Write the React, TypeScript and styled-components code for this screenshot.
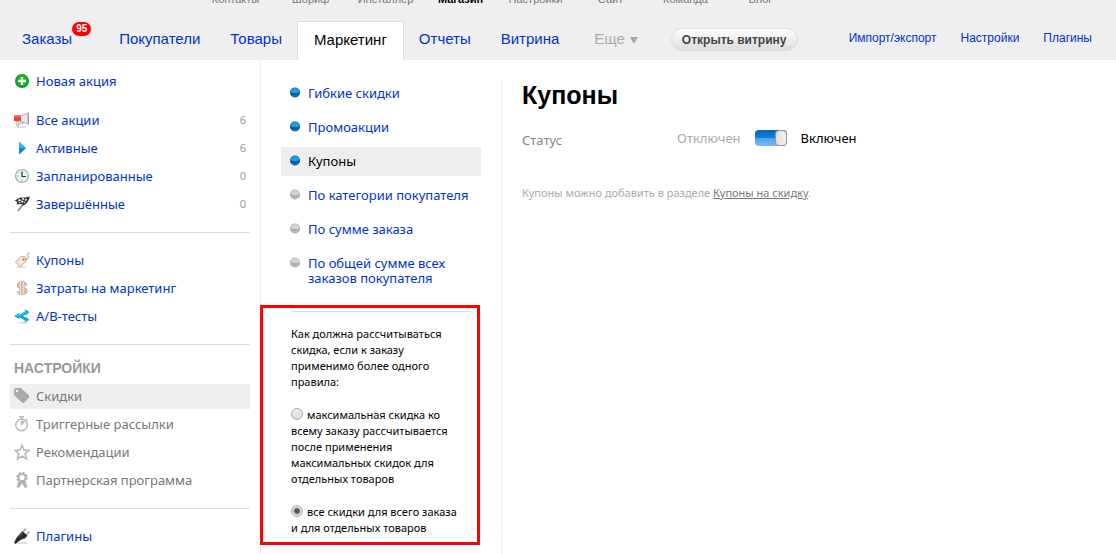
import React from 'react';
import styled, { createGlobalStyle } from 'styled-components';

const GlobalStyle = createGlobalStyle`
  *, *::before, *::after { box-sizing: border-box; }
  body {
    margin: 0;
    background: #fff;
    color: #000;
    font: 13px/16px "Noto Sans", "Open Sans", sans-serif;
  }
  a { color: #03c; text-decoration: none; }
  h1, h2, p, ul { margin: 0; padding: 0; }
  ul { list-style: none; }
`;

const Page = styled.div`
  min-height: 100vh;
  display: flex;
  flex-direction: column;
  overflow: hidden;
`;

const Header = styled.header`
  background: #efefef;
  font-family: "Liberation Sans", Arial, sans-serif;
`;

const AppStrip = styled.nav`
  display: flex;
  align-items: flex-end;
  height: 5px;
  padding-left: 198px;
  overflow: hidden;
  white-space: nowrap;
`;

const AppLink = styled.a<{ $active?: boolean }>`
  width: 75px;
  text-align: center;
  font-size: 11px;
  line-height: 12px;
  color: ${p => (p.$active ? '#000' : '#777')};
  font-weight: ${p => (p.$active ? 700 : 400)};
`;

const Bar = styled.div`
  display: flex;
  height: 55px;
  padding-top: 16px;
  white-space: nowrap;
`;

const Tabs = styled.nav`
  display: flex;
  padding-left: 7px;
`;

const Tab = styled.a<{ $muted?: boolean; $wide?: boolean }>`
  padding: 9px 15px 0;
  padding-left: ${p => (p.$muted ? '20px' : '15px')};
  margin-right: ${p => (p.$wide ? '17px' : '0')};
  color: ${p => (p.$muted ? '#aaa' : '#03c')};
  font-size: 15px;
  line-height: 18px;
`;

const ActiveTab = styled(Tab)`
  padding: 9px 16px 0;
  border: 1px solid #ddd;
  border-bottom: 0;
  background: #fff;
  color: #000;
`;

const BadgeAnchor = styled.span`
  position: relative;
`;

const Badge = styled.span`
  position: absolute;
  left: 100%;
  top: -8px;
  padding: 0 4px;
  border-radius: 7px;
  background: #f00;
  color: #fff;
  font-size: 10px;
  font-weight: 700;
  line-height: 14px;
`;

const Caret = styled.svg`
  margin-left: 5px;
`;

const StoreButton = styled.button`
  height: 23px;
  margin: 7px 0 0 18px;
  padding: 0 10px;
  border: 1px solid #ddd;
  border-radius: 12px;
  background: linear-gradient(#fff, #dcdcdc);
  color: #444;
  font: 700 12px/18px "Liberation Sans", Arial, sans-serif;
`;

const SideLinks = styled.nav`
  display: flex;
  gap: 24px;
  margin-left: auto;
  padding: 10px 24px 0 0;
  font-size: 12px;
  line-height: 14px;
`;

const Columns = styled.div`
  flex: 1;
  display: flex;
`;

const Sidebar = styled.aside`
  flex: none;
  width: 260px;
  padding: 9px 10px 4px;
`;

const Group = styled.ul`
  display: grid;
  gap: 3px;
  & + & { margin-top: 14px; }
`;

const Rule = styled.hr`
  height: 1px;
  margin: 15px 0;
  border: 0;
  background: #ddd;
`;

const GroupTitle = styled.h2`
  padding: 0 4px;
  margin-bottom: 8px;
  color: #999;
  font: 700 14px/16px "Liberation Sans", Arial, sans-serif;
`;

const Row = styled.a<{ $active?: boolean; $muted?: boolean }>`
  display: flex;
  align-items: center;
  gap: 6px;
  height: 25px;
  padding: 0 4px 2px;
  background: ${p => (p.$active ? '#eee' : 'transparent')};
  color: ${p => (p.$muted ? '#777' : '#03c')};
  white-space: nowrap;
  svg { flex: none; }
`;

const Count = styled.span`
  margin-left: auto;
  color: #999;
  font-size: 11px;
`;

const Discounts = styled.section`
  flex: none;
  width: 241px;
  border-left: 1px solid #eee;
  padding: 19px 0 9px;
`;

const RuleList = styled.ul`
  display: grid;
  gap: 5px;
  padding: 0 20px;
`;

const RuleLink = styled.a<{ $active?: boolean }>`
  display: flex;
  gap: 8px;
  padding: 7px 8px 7px 9px;
  background: ${p => (p.$active ? '#eee' : 'transparent')};
  color: ${p => (p.$active ? '#000' : '#03c')};
  line-height: 15px;
  svg { flex: none; margin-top: 1px; }
`;

const Calculation = styled.form`
  width: 220px;
  margin: 12px 0 0 -1px;
  padding: 3px 6px 6px 28px;
  border: 3px solid #f00;
  font-size: 11px;
  line-height: 16px;
  p, label { display: block; width: 174px; }
  label { margin-top: 17px; }
`;

const Line = styled.hr`
  width: 180px;
  height: 1px;
  margin: 0 0 14px;
  border: 0;
  background: #ddd;
`;

const Radio = styled.input`
  appearance: none;
  width: 12px;
  height: 12px;
  margin: 0 4px 0 0;
  vertical-align: -1px;
  border: 1px solid #aaa;
  border-radius: 50%;
  background: linear-gradient(#eee, #ddd);
  &:checked {
    background: radial-gradient(circle, #555 0 2px, #e4e4e4 4px);
  }
`;

const Content = styled.main`
  flex: 1;
  margin-top: 20px;
  padding-left: 20px;
  border-left: 1px solid #eee;
  h1 { font: 700 25px/30px "Liberation Sans", Arial, sans-serif; }
`;

const Field = styled.div`
  display: flex;
  align-items: center;
  margin-top: 18px;
`;

const FieldName = styled.span`
  width: 155px;
  padding-top: 4px;
  color: #888;
`;

const SwitchLabel = styled.label`
  display: flex;
  align-items: center;
  gap: 14px;
`;

const Off = styled.span`
  color: #aaa;
`;

const Switch = styled.input`
  appearance: none;
  width: 32px;
  height: 16px;
  margin: 0;
  border-radius: 4px;
  background: linear-gradient(#06b 0, #1480d8 50%, #4aa3ec 51%, #7bbdf5 100%);
  &::after {
    content: '';
    display: block;
    width: 12px;
    height: 16px;
    margin-left: auto;
    border: 1px solid #999;
    border-radius: 4px;
    background: linear-gradient(90deg, #ddd, #f4f4f4);
  }
`;

const Hint = styled.p`
  margin-top: 37px;
  color: #aaa;
  font-size: 11px;
  a { color: #777; text-decoration: underline; }
`;

const icons: Record<string, React.ReactNode> = {
  add: (
    <>
      <circle cx="8" cy="8" r="7" fill="#0a9c1c" />
      <circle cx="8" cy="7" r="5.5" fill="#16b52b" />
      <path d="M8 4v8M4 8h8" stroke="#fff" strokeWidth="2.4" />
    </>
  ),
  horn: (
    <>
      <ellipse cx="7" cy="15" rx="5" ry="1" fill="#ddd" />
      <path d="M6.500 4 14 1v11L6.500 9z" fill="#e8e8e8" stroke="#b5b5b5" />
      <path d="M14.500.5v12" stroke="#999" />
      <path d="M0 3.500h7v5.500H0z" fill="#e8403a" />
      <path d="M0 3.500h7v2H0z" fill="#f0665f" />
      <path d="M2 9.500h2.500v4.500H3zM5 10h4v2H5" fill="#eee" stroke="#aaa" strokeWidth=".8" />
    </>
  ),
  play: (
    <>
      <path d="M5 1.500 12 8l-7 6.500z" fill="#2fb4ea" />
      <path d="M5 8h7l-7 6.500z" fill="#0f8cd0" />
    </>
  ),
  clock: (
    <>
      <circle cx="8" cy="8" r="6.500" fill="#e9f1f1" stroke="#a3adad" strokeWidth="1.200" />
      <path d="M8 3.500v5h4" fill="none" stroke="#333" strokeWidth="1.200" />
      <path d="M3 8h1.500M8 12v1.500" stroke="#999" />
    </>
  ),
  flag: (
    <>
      <path d="M13 3 4 15" stroke="#c48a5a" strokeWidth="1.800" />
      <path d="M0 4.500C3 4.500 4 1.500 7 1.500S12 1.500 16 .5C15 4 13 8 9.500 9.500 7.500 7.500 5 8 2.500 8.500 4 6.500 3 5 0 4.500z" fill="#333" />
      <path d="m4 4 2-1 1 1.500-2 1zM8 2.500l2-.5.500 1.500-2 .5zM7 5l2-.5.5 2-2 0zM11 3.500l2-1-.5 2-1.500.5zM4.500 6.500l2-.8-.5 1.500zM10 6l1.500-.5-1 2z" fill="#fff" />
    </>
  ),
  tag: (
    <>
      <ellipse cx="7" cy="15" rx="5" ry="1" fill="#ddd" />
      <path d="M1.500 10 7 4.500l5 .5v4.500l-6 5z" fill="#fae2d0" stroke="#d2ae97" />
      <path d="M9.500 7.500c4 .5 6-2 4.500-3.500s0-3.500 2-2.500" fill="none" stroke="#a98a79" strokeWidth=".9" />
      <circle cx="9.500" cy="7.500" r=".9" fill="#8e7566" />
    </>
  ),
  money: (
    <>
      <path d="M6.500 1v14M9.500 1v14" stroke="#bfa390" strokeWidth="2" />
      <path d="M12 5.500C11.500 2.500 4.500 2.500 4.500 5.500S12 8 12 11s-7.500 2.500-8 0" fill="none" stroke="#b59883" strokeWidth="3" />
      <path d="M12 5.500C11.500 2.500 4.500 2.500 4.500 5.500S12 8 12 11s-7.500 2.500-8 0M6.500 1.500v13M9.500 1.500v13" fill="none" stroke="#f6dcc9" strokeWidth="1.200" />
    </>
  ),
  split: (
    <>
      <ellipse cx="9" cy="14.700" rx="6" ry="1" fill="#ddd" />
      <path d="M3 8h3l6-3.500M6 8l6 3.500" fill="none" stroke="#0ba0d8" strokeWidth="2.800" />
      <path d="M0 8l5-3v6zM10.500 1l5 3-3.500 3.500zM10.500 14.500l5-2.500-3.500-3.500z" fill="#12aee6" />
      <path d="M2 7.500h4l6-3.500" fill="none" stroke="#3accf7" />
    </>
  ),
  label: (
    <>
      <path d="M0 1.500 1.500 0H7l8 7.500v2L10 15 8.500 15 0 7z" fill="#aaa" />
      <circle cx="3" cy="3" r="1.200" fill="#eee" />
    </>
  ),
  timer: (
    <>
      <circle cx="7.500" cy="9" r="5.800" fill="none" stroke="#b8b8b8" strokeWidth="1.400" />
      <path d="M5 .8h5M7.500 1v2.500M11.800 4.500 13.500 3" fill="none" stroke="#b8b8b8" strokeWidth="1.500" />
      <path d="M7 9.800V4.500a4.500 4.500 0 0 1 4 1.500z" fill="#b8b8b8" />
    </>
  ),
  star: (
    <path d="m8 1.500 2 4.600 5 .4-3.800 3.300L12.500 15 8 12.200 3.500 15l1.300-5.200L1 6.500l5-.4z" fill="none" stroke="#b5b5b5" strokeWidth="1.500" />
  ),
  award: (
    <>
      <circle cx="8" cy="5.500" r="5" fill="none" stroke="#b0b0b0" strokeWidth="1.500" strokeDasharray="2.200 1.700" />
      <circle cx="8" cy="5.500" r="3.600" fill="none" stroke="#b0b0b0" strokeWidth="2" />
      <path d="M4.500 9.500h7l2 6h-3L8 11l-2.500 4.500h-3z" fill="#b0b0b0" />
    </>
  ),
  plug: (
    <>
      <ellipse cx="8" cy="15" rx="6" ry="1" fill="#ddd" />
      <path d="M9.500 3.500 12 .5M12.500 6.500l3-3" stroke="#999" strokeWidth="1.300" />
      <path d="M3 9 8.500 3l5 4.500-2 2.500-5 2-5 4L0 14.500z" fill="#2d2d2d" />
      <path d="m5 8.500 4-4" stroke="#777" />
    </>
  ),
};

const Icon = ({ name }: { name: string }) => (
  <svg width="16" height="16" viewBox="0 0 16 16" aria-hidden="true">{icons[name]}</svg>
);

const Dot = ({ on }: { on: boolean }) => (
  <svg width="10" height="11" viewBox="0 0 10 11" aria-hidden="true">
    <circle cx="5" cy="5.500" r="5" fill={on ? '#02569b' : '#aaa'} />
    <path d="M.5 5.500a4.500 4.500 0 0 1 9 0q-4.500 1.500-9 0z" fill={on ? '#18a0e0' : '#d2d2d2'} />
    <path d="M2 8q3 2.500 6 0" fill="none" stroke={on ? '#1680c4' : '#c4c4c4'} />
  </svg>
);

interface Item {
  icon: string;
  text: string;
  count?: number;
  active?: boolean;
}

const Menu = ({ items, muted }: { items: Item[]; muted?: boolean }) => (
  <Group>
    {items.map(i => (
      <li key={i.text}>
        <Row href="#" $active={i.active} $muted={muted}>
          <Icon name={i.icon} />
          {i.text}
          {i.count !== undefined && <Count>{i.count}</Count>}
        </Row>
      </li>
    ))}
  </Group>
);

const apps = ['Контакты', 'Шориф', 'Инсталлер', 'Магазин', 'Настройки', 'Сайт', 'Команда', 'Блог'];

const rules = [
  { text: 'Гибкие скидки', on: true },
  { text: 'Промоакции', on: true },
  { text: 'Купоны', on: true, active: true },
  { text: 'По категории покупателя', on: false },
  { text: 'По сумме заказа', on: false },
  { text: 'По общей сумме всех заказов покупателя', on: false },
];

export default function App() {
  return (
    <Page>
      <GlobalStyle />
      <Header>
        <AppStrip>
          {apps.map(a => <AppLink key={a} href="#" $active={a === 'Магазин'}>{a}</AppLink>)}
        </AppStrip>
        <Bar>
          <Tabs>
            <Tab href="#" $wide><BadgeAnchor>Заказы<Badge>95</Badge></BadgeAnchor></Tab>
            <Tab href="#">Покупатели</Tab>
            <Tab href="#">Товары</Tab>
            <ActiveTab href="#">Маркетинг</ActiveTab>
            <Tab href="#">Отчеты</Tab>
            <Tab href="#">Витрина</Tab>
            <Tab href="#" $muted>
              Еще
              <Caret width="8" height="7" viewBox="0 0 8 7" aria-hidden="true"><path d="M0 0h8L4 7z" fill="#aaa" /></Caret>
            </Tab>
          </Tabs>
          <StoreButton type="button">Открыть витрину</StoreButton>
          <SideLinks>
            <a href="#">Импорт/экспорт</a>
            <a href="#">Настройки</a>
            <a href="#">Плагины</a>
          </SideLinks>
        </Bar>
      </Header>
      <Columns>
        <Sidebar>
          <Menu items={[{ icon: 'add', text: 'Новая акция' }]} />
          <Menu
            items={[
              { icon: 'horn', text: 'Все акции', count: 6 },
              { icon: 'play', text: 'Активные', count: 6 },
              { icon: 'clock', text: 'Запланированные', count: 0 },
              { icon: 'flag', text: 'Завершённые', count: 0 },
            ]}
          />
          <Rule />
          <Menu
            items={[
              { icon: 'tag', text: 'Купоны' },
              { icon: 'money', text: 'Затраты на маркетинг' },
              { icon: 'split', text: 'A/B-тесты' },
            ]}
          />
          <Rule />
          <GroupTitle>НАСТРОЙКИ</GroupTitle>
          <Menu
            muted
            items={[
              { icon: 'label', text: 'Скидки', active: true },
              { icon: 'timer', text: 'Триггерные рассылки' },
              { icon: 'star', text: 'Рекомендации' },
              { icon: 'award', text: 'Партнерская программа' },
            ]}
          />
          <Rule />
          <Menu items={[{ icon: 'plug', text: 'Плагины' }]} />
        </Sidebar>
        <Discounts>
          <RuleList>
            {rules.map(r => (
              <li key={r.text}>
                <RuleLink href="#" $active={r.active}><Dot on={r.on} /><span>{r.text}</span></RuleLink>
              </li>
            ))}
          </RuleList>
          <Calculation>
            <Line />
            <p>Как должна рассчитываться скидка, если к заказу применимо более одного правила:</p>
            <label>
              <Radio type="radio" name="calc" value="max" />
              максимальная скидка ко всему заказу рассчитывается после применения максимальных скидок для отдельных товаров
            </label>
            <label>
              <Radio type="radio" name="calc" value="sum" defaultChecked />
              все скидки для всего заказа и для отдельных товаров
            </label>
          </Calculation>
        </Discounts>
        <Content>
          <h1>Купоны</h1>
          <Field>
            <FieldName>Статус</FieldName>
            <SwitchLabel>
              <Off>Отключен</Off>
              <Switch type="checkbox" role="switch" defaultChecked />
              <span>Включен</span>
            </SwitchLabel>
          </Field>
          <Hint>Купоны можно добавить в разделе <a href="#">Купоны на скидку</a>.</Hint>
        </Content>
      </Columns>
    </Page>
  );
}
